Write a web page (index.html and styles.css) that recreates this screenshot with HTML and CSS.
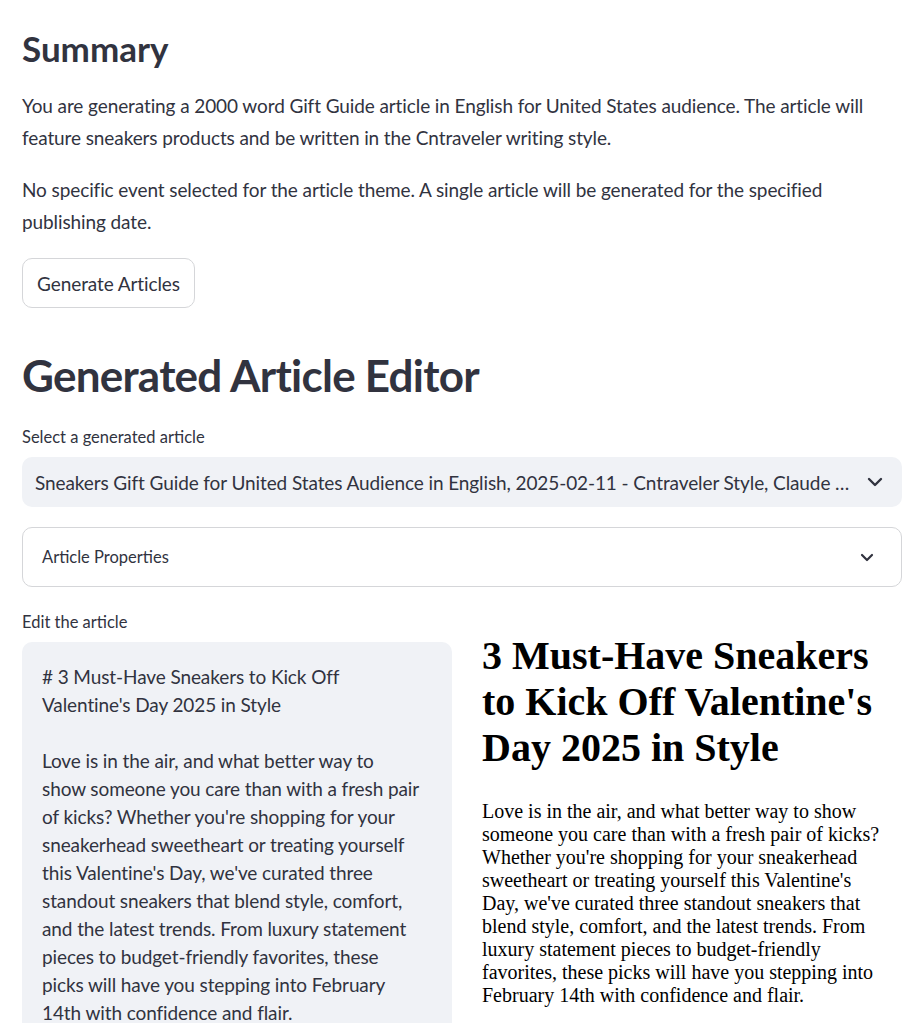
FILE: index.html
```html
<!DOCTYPE html>
<html lang="en">
<head>
<meta charset="utf-8">
<title>Article Generator</title>
<link rel="stylesheet" href="styles.css">
</head>
<body>
<main class="page">
  <h3 class="section-title">Summary</h3>
  <div class="summary">
    <p>You are generating a 2000 word Gift Guide article in English for United States audience. The article will<br>feature sneakers products and be written in the Cntraveler writing style.</p>
    <p>No specific event selected for the article theme. A single article will be generated for the specified<br>publishing date.</p>
  </div>
  <button class="btn" type="button">Generate Articles</button>

  <h1 class="page-title">Generated Article Editor</h1>

  <label class="field-label">Select a generated article</label>
  <div class="select">
    <span class="select-value">Sneakers Gift Guide for United States Audience in English, 2025-02-11 - Cntraveler Style, Claude …</span>
    <svg class="chev chev-select" viewBox="0 0 16 10" width="16" height="10"><polyline points="2,2 8,8 14,2" fill="none" stroke="#31333f" stroke-width="2.4" stroke-linecap="round" stroke-linejoin="round"/></svg>
  </div>

  <div class="expander">
    <span class="expander-title">Article Properties</span>
    <svg class="chev chev-exp" viewBox="0 0 14 9" width="14" height="9"><polyline points="2,2 7,7 12,2" fill="none" stroke="#31333f" stroke-width="2.2" stroke-linecap="round" stroke-linejoin="round"/></svg>
  </div>

  <div class="columns">
    <div class="col col-left">
      <label class="field-label">Edit the article</label>
      <div class="textarea">
        <div class="ta-line"># 3 Must-Have Sneakers to Kick Off</div>
        <div class="ta-line">Valentine's Day 2025 in Style</div>
        <div class="ta-line">&nbsp;</div>
        <div class="ta-line">Love is in the air, and what better way to</div>
        <div class="ta-line">show someone you care than with a fresh pair</div>
        <div class="ta-line">of kicks? Whether you're shopping for your</div>
        <div class="ta-line">sneakerhead sweetheart or treating yourself</div>
        <div class="ta-line">this Valentine's Day, we've curated three</div>
        <div class="ta-line">standout sneakers that blend style, comfort,</div>
        <div class="ta-line">and the latest trends. From luxury statement</div>
        <div class="ta-line">pieces to budget-friendly favorites, these</div>
        <div class="ta-line">picks will have you stepping into February</div>
        <div class="ta-line">14th with confidence and flair.</div>
        <div class="ta-line">&nbsp;</div>
      </div>
    </div>
    <div class="col col-right">
      <article class="preview">
        <h1>3 Must-Have Sneakers<br>to Kick Off Valentine's<br>Day 2025 in Style</h1>
        <p>Love is in the air, and what better way to show<br>someone you care than with a fresh pair of kicks?<br>Whether you're shopping for your sneakerhead<br>sweetheart or treating yourself this Valentine's<br>Day, we've curated three standout sneakers that<br>blend style, comfort, and the latest trends. From<br>luxury statement pieces to budget-friendly<br>favorites, these picks will have you stepping into<br>February 14th with confidence and flair.</p>
      </article>
    </div>
  </div>
</main>
</body>
</html>
```

FILE: styles.css
```css
html, body {
  margin: 0;
  padding: 0;
  background: #ffffff;
}

body {
  color: #31333f;
  font-family: Lato, "Noto Sans", "Liberation Sans", sans-serif;
  overflow: hidden;
}

.page {
  width: 880px;
  margin-left: 22px;
  padding-top: 27px;
  display: flex;
  flex-direction: column;
  align-items: flex-start;
}

.section-title {
  margin: 0;
  font-size: 35px;
  line-height: 42px;
  font-weight: 700;
}

.summary {
  margin-top: 21px;
}

.summary p {
  margin: 0 0 20px;
  font-size: 19px;
  letter-spacing: -0.1px;
  line-height: 32px;
  white-space: nowrap;
}

.btn {
  margin-top: 0;
  width: 173px;
  height: 50px;
  border: 1px solid #d5d6d9;
  border-radius: 10px;
  background: #ffffff;
  color: #31333f;
  font-family: inherit;
  font-size: 19px;
  letter-spacing: -0.1px;
  padding: 0;
}

.page-title {
  margin: 38px 0 0;
  font-size: 44px;
  letter-spacing: -0.75px;
  line-height: 58px;
  font-weight: 700;
}

.field-label {
  display: block;
  font-size: 16.5px;
  line-height: 26px;
  margin-top: 20px;
}

.select {
  margin-top: 7px;
  width: 880px;
  height: 50px;
  box-sizing: border-box;
  background: #f0f2f6;
  border-radius: 10px;
  display: flex;
  align-items: center;
  padding: 0 19px 0 13px;
  gap: 12px;
}

.select-value {
  flex: 1;
  min-width: 0;
  font-size: 19px;
  letter-spacing: -0.1px;
  white-space: nowrap;
  overflow: hidden;
  text-overflow: ellipsis;
}

.chev {
  flex: none;
  display: block;
}

.expander {
  margin-top: 20px;
  width: 880px;
  height: 60px;
  box-sizing: border-box;
  border: 1px solid #d5d6d9;
  border-radius: 10px;
  display: flex;
  align-items: center;
  justify-content: space-between;
  padding: 0 27px 0 19px;
}

.expander-title {
  font-size: 16.5px;
}

.columns {
  width: 880px;
  display: flex;
  gap: 20px;
  margin-top: 22px;
}

.col {
  flex: 1;
  min-width: 0;
}

.col-left .field-label {
  margin-top: 0;
}

.textarea {
  margin-top: 7px;
  height: 420px;
  box-sizing: border-box;
  background: #f0f2f6;
  border-radius: 10px;
  padding: 21px 20px;
  font-size: 19px;
  letter-spacing: -0.1px;
  line-height: 28px;
}

.ta-line {
  white-space: nowrap;
}

.preview {
  padding: 0 10px;
  color: #000000;
  font-family: "Liberation Serif", "Times New Roman", serif;
}

.preview h1 {
  margin: 24px 0 0;
  font-size: 40px;
  line-height: 46px;
  font-weight: 700;
  white-space: nowrap;
}

.preview p {
  margin: 29px 0 0;
  font-size: 20px;
  line-height: 23px;
  white-space: nowrap;
}
```
